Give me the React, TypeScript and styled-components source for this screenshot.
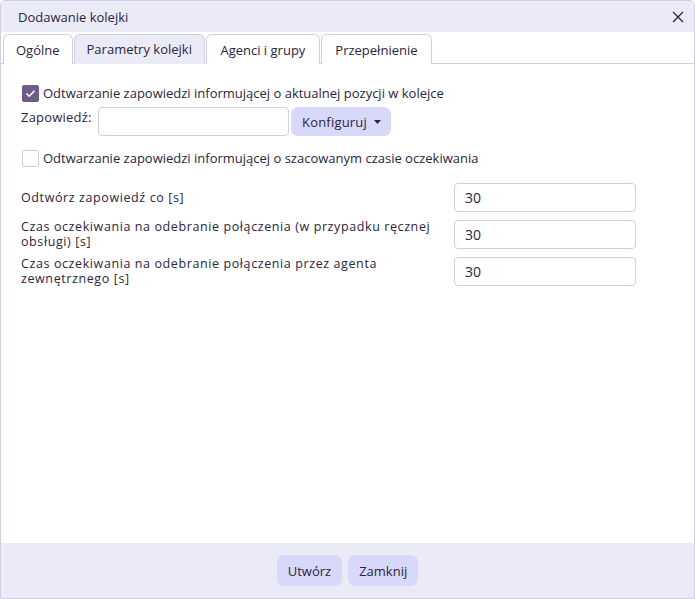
import React from "react";
import styled, { createGlobalStyle } from "styled-components";

const Global = createGlobalStyle`
  html, body { margin: 0; padding: 0; }
  body { font-family: "Open Sans", "Liberation Sans", sans-serif; color: #2b2540; }
  * { box-sizing: border-box; }
`;

const Dialog = styled.div`
  width: 695px;
  height: 599px;
  display: flex;
  flex-direction: column;
  border: 1px solid #cfcfe4;
  border-radius: 5px 5px 0 0;
  background: #fff;
  overflow: hidden;
`;

const TitleBar = styled.div`
  height: 31px;
  background: #ebebf7;
  display: flex;
  align-items: center;
  justify-content: space-between;
  padding: 0 8px 0 17px;
  font-size: 13px;
`;

const CloseBtn = styled.button`
  border: none;
  background: transparent;
  padding: 0;
  width: 16px;
  height: 16px;
  display: flex;
  align-items: center;
  justify-content: center;
  cursor: pointer;
`;

const TabStrip = styled.div`
  display: flex;
  gap: 1px;
  padding: 2px 0 0 2px;
  border-bottom: 1px solid #cfcfe4;
`;

const Tab = styled.div<{ $active?: boolean; $px?: number }>`
  height: 30px;
  padding: 0 ${(p) => p.$px ?? 12}px;
  display: flex;
  align-items: center;
  font-size: 13px;
  border: 1px solid #cfcfe4;
  border-bottom: none;
  border-radius: 6px 6px 0 0;
  background: ${(p) => (p.$active ? "#ebebf7" : "#fff")};
  margin-bottom: -1px;
  ${(p) => (p.$active ? "border-bottom: 1px solid #ebebf7;" : "")}
`;

const Content = styled.div`
  flex: 1;
  padding: 20px 20px 0 20px;
  display: flex;
  flex-direction: column;
`;

const CheckRow = styled.label`
  display: flex;
  align-items: center;
  gap: 4px;
  font-size: 13px;
  height: 18px;
`;

const Box = styled.span<{ $checked?: boolean }>`
  width: 17px;
  height: 17px;
  margin-left: 1px;
  border-radius: 2px;
  border: 1px solid ${(p) => (p.$checked ? "#6d5c8a" : "#cfcfe4")};
  background: ${(p) => (p.$checked ? "#6d5c8a" : "#fff")};
  display: flex;
  align-items: center;
  justify-content: center;
`;

const AnnounceRow = styled.div`
  display: flex;
  align-items: flex-start;
  margin-top: 5px;
`;

const AnnounceLabel = styled.span`
  font-size: 13px;
  width: 77px;
  padding-top: 1px;
  letter-spacing: 0.2px;
`;

const TextInput = styled.input<{ $w: number }>`
  width: ${(p) => p.$w}px;
  height: 29px;
  border: 1px solid #cfcfe4;
  border-radius: 4px;
  font-family: inherit;
  font-size: 14px;
  color: #2b2540;
  padding: 0 10px;
  outline: none;
`;

const DropBtn = styled.button`
  margin-left: 2px;
  height: 29px;
  padding: 0 10px 0 11px;
  border: none;
  border-radius: 7px;
  background: #d8d8fa;
  font-family: inherit;
  font-size: 13px;
  letter-spacing: 0.2px;
  color: #2b2540;
  display: flex;
  align-items: center;
  gap: 7px;
`;

const Spacer = styled.div<{ $h: number }>`
  height: ${(p) => p.$h}px;
  flex-shrink: 0;
`;

const FieldGrid = styled.div`
  display: grid;
  grid-template-columns: 433px 182px;
  row-gap: 7px;
  align-items: center;
`;

const FieldLabel = styled.span`
  font-size: 12.5px;
  letter-spacing: 0.6px;
  line-height: 15px;
  padding-right: 12px;
`;

const Footer = styled.div`
  height: 55px;
  background: #ebebf7;
  display: flex;
  justify-content: center;
  align-items: center;
  gap: 6px;
`;

const FooterBtn = styled.button`
  height: 31px;
  padding: 0 11px;
  border: none;
  border-radius: 7px;
  background: #d8d8fa;
  font-family: inherit;
  font-size: 13px;
  color: #2b2540;
`;

export default function App() {
  return (
    <>
      <Global />
      <Dialog>
        <TitleBar>
          <span>Dodawanie kolejki</span>
          <CloseBtn aria-label="Zamknij">
            <svg width="12" height="12" viewBox="0 0 12 12">
              <path d="M1 1L11 11M11 1L1 11" stroke="#2b2540" strokeWidth="1.3" />
            </svg>
          </CloseBtn>
        </TitleBar>
        <TabStrip>
          <Tab>Ogólne</Tab>
          <Tab $active>Parametry kolejki</Tab>
          <Tab $px={13.5}>Agenci i grupy</Tab>
          <Tab $px={13.5}>Przepełnienie</Tab>
        </TabStrip>
        <Content>
          <CheckRow>
            <Box $checked>
              <svg width="11" height="9" viewBox="0 0 11 9">
                <path d="M1.5 4.5L4.2 7.2L9.5 1.8" stroke="#fff" strokeWidth="1.6" fill="none" />
              </svg>
            </Box>
            Odtwarzanie zapowiedzi informującej o aktualnej pozycji w kolejce
          </CheckRow>
          <AnnounceRow>
            <AnnounceLabel>Zapowiedź:</AnnounceLabel>
            <TextInput $w={191} />
            <DropBtn>
              Konfiguruj
              <svg width="7" height="4" viewBox="0 0 7 4">
                <path d="M0 0H7L3.5 4Z" fill="#2b2540" />
              </svg>
            </DropBtn>
          </AnnounceRow>
          <Spacer $h={13} />
          <CheckRow>
            <Box />
            Odtwarzanie zapowiedzi informującej o szacowanym czasie oczekiwania
          </CheckRow>
          <Spacer $h={16} />
          <FieldGrid>
            <FieldLabel>Odtwórz zapowiedź co [s]</FieldLabel>
            <TextInput $w={182} defaultValue="30" />
            <FieldLabel>Czas oczekiwania na odebranie połączenia (w przypadku ręcznej obsługi) [s]</FieldLabel>
            <TextInput $w={182} defaultValue="30" />
            <FieldLabel>Czas oczekiwania na odebranie połączenia przez agenta zewnętrznego [s]</FieldLabel>
            <TextInput $w={182} defaultValue="30" />
          </FieldGrid>
        </Content>
        <Footer>
          <FooterBtn>Utwórz</FooterBtn>
          <FooterBtn>Zamknij</FooterBtn>
        </Footer>
      </Dialog>
    </>
  );
}
